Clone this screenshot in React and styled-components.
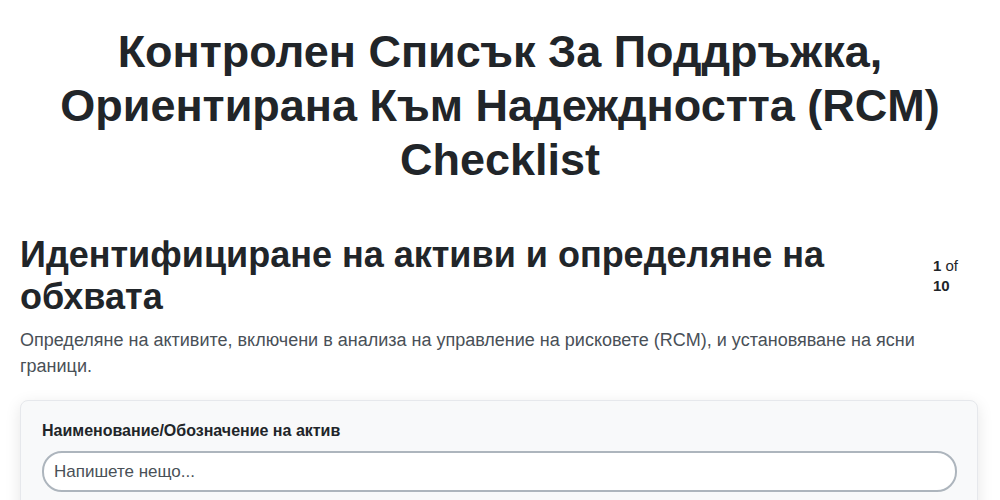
import styled, { createGlobalStyle } from "styled-components";

const GlobalStyle = createGlobalStyle`
  body {
    margin: 0;
    background: #fff;
    font-family: "Liberation Sans", Arial, sans-serif;
    color: #212529;
  }
`;

const Page = styled.main`
  padding: 25px 20px 0 20px;
`;

const Title = styled.h1`
  margin: 0 0 47px 0;
  text-align: center;
  font-size: 45px;
  line-height: 54px;
  font-weight: 700;
  padding: 0 40px;
`;

const SectionHead = styled.div`
  display: flex;
  align-items: center;
  justify-content: space-between;
  gap: 20px;
`;

const SectionTitle = styled.h2`
  margin: 0;
  font-size: 36px;
  line-height: 42px;
  font-weight: 700;
  max-width: 860px;
`;

const Counter = styled.div`
  width: 36px;
  margin-right: 11px;
  font-size: 15px;
  line-height: 20px;

  b {
    font-weight: 700;
  }
`;

const Description = styled.p`
  margin: 9px 0 21px 0;
  max-width: 920px;
  font-size: 18px;
  line-height: 26px;
  color: #495057;
`;

const Card = styled.section`
  background: #f8f9fa;
  border: 1px solid #e6e8ec;
  border-radius: 8px;
  box-shadow: 0 4px 16px rgba(0, 0, 0, 0.1);
  padding: 20px 20px 24px 21px;
  margin-right: 2px;
`;

const Label = styled.label`
  display: block;
  font-size: 16px;
  line-height: 20px;
  font-weight: 700;
  margin-bottom: 10px;
`;

const Input = styled.input`
  box-sizing: border-box;
  width: 100%;
  height: 41px;
  padding: 0 10px;
  border: 2px solid #adb5bd;
  border-radius: 20px;
  background: #fff;
  font-family: "Liberation Sans", Arial, sans-serif;
  font-size: 17px;
  color: #212529;
  outline: none;

  &::placeholder {
    color: #495057;
  }
`;

export default function App() {
  return (
    <>
      <GlobalStyle />
      <Page>
        <Title>
          Контролен Списък За Поддръжка, Ориентирана Към Надеждността (RCM)
          Checklist
        </Title>
        <SectionHead>
          <SectionTitle>
            Идентифициране на активи и определяне на обхвата
          </SectionTitle>
          <Counter>
            <b>1</b> of <b>10</b>
          </Counter>
        </SectionHead>
        <Description>
          Определяне на активите, включени в анализа на управление на рисковете
          (RCM), и установяване на ясни граници.
        </Description>
        <Card>
          <Label htmlFor="asset">Наименование/Обозначение на актив</Label>
          <Input id="asset" type="text" placeholder="Напишете нещо..." />
        </Card>
      </Page>
    </>
  );
}
